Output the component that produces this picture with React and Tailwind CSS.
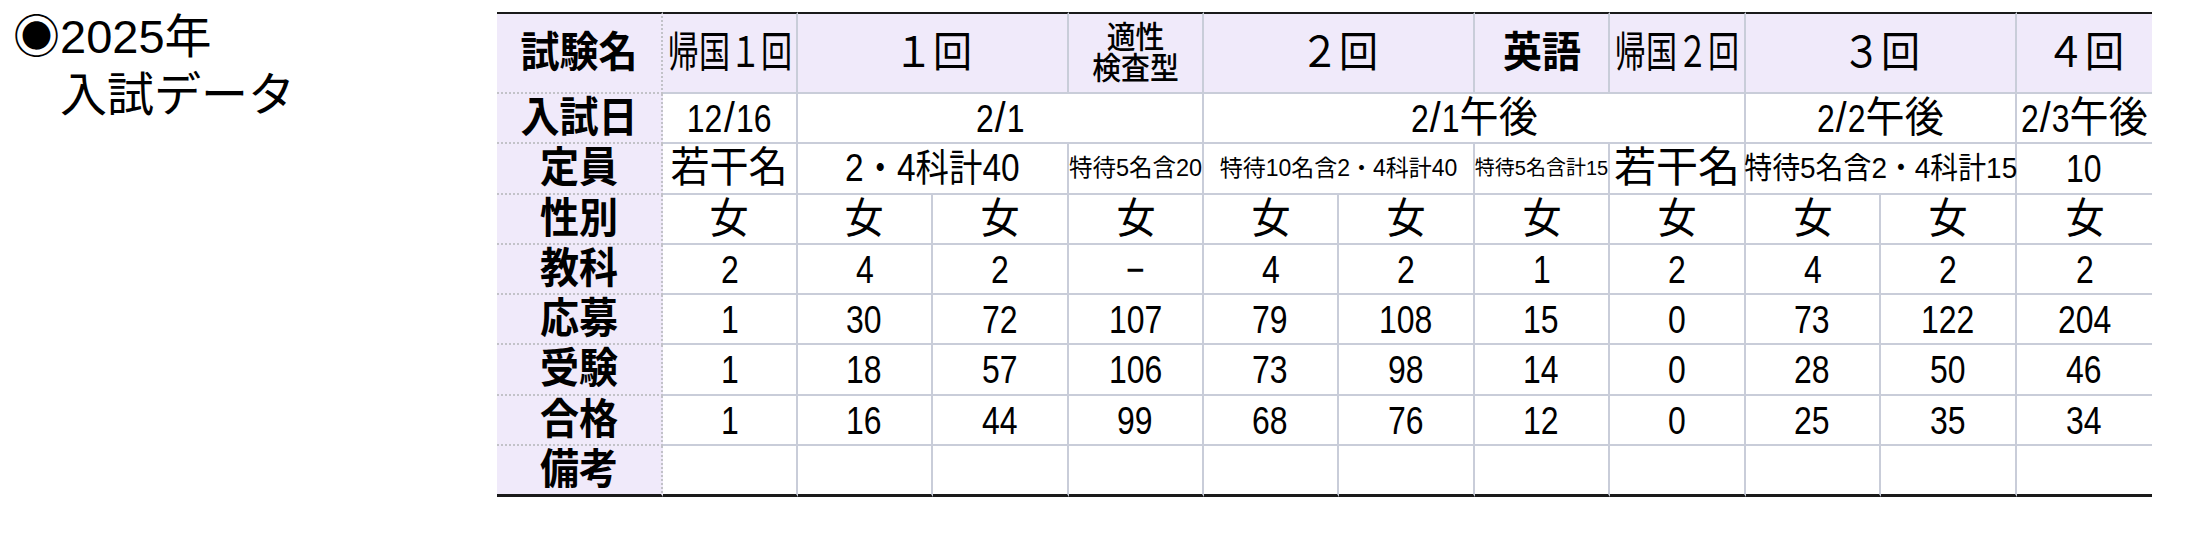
import React from "react";

const DMX = ["", "mx-[-0.033em]", "mx-[-0.067em]", "mx-[-0.1em]", "mx-[-0.134em]"];

function fmt(str) {
  const parts = str.match(/[0-9−]+|\/|[^0-9−/]+/g) || [];
  return parts.map((p, i) => {
    if (/^[0-9−]+$/.test(p))
      return (
        <span
          key={i}
          className={`inline-block text-[0.93em] scale-x-[0.88] font-['Liberation_Sans',sans-serif] ${DMX[p.length]}`}
        >
          {p}
        </span>
      );
    if (p === "/")
      return (
        <span key={i} className="mx-[0.03em]">
          /
        </span>
      );
    return <span key={i}>{p}</span>;
  });
}

function Td({ children, colSpan, last, extra = "", inner = "text-[42px] scale-x-[0.93]", raw = false }) {
  return (
    <td
      colSpan={colSpan}
      className={`p-0 text-center align-middle border-b-2 ${last ? "" : "border-r-2"} border-solid border-[#c9cdd9] ${extra}`}
    >
      <div className="flex items-center justify-center">
        <span className={`block whitespace-nowrap leading-[1.15] ${inner}`}>
          {raw || typeof children !== "string" ? children : fmt(children)}
        </span>
      </div>
    </td>
  );
}

function Lb({ children, extra = "" }) {
  return (
    <td
      className={`p-0 text-center align-middle bg-[#f0eafa] border-r-2 border-b-2 border-dotted border-[#c2c2c8] ${extra}`}
    >
      <div className="flex items-center justify-center">
        <span className="block whitespace-nowrap leading-[1.15] text-[42px] font-bold scale-x-[0.93]">{children}</span>
      </div>
    </td>
  );
}

const HEAD = "bg-[#f0eafa] border-t-2 border-t-[#1a1a1a]";
const BOT = "border-b-[3px] border-b-[#1a1a1a]";

export default function App() {
  const kyoka = ["2", "4", "2", "−", "4", "2", "1", "2", "4", "2", "2"];
  const oubo = ["1", "30", "72", "107", "79", "108", "15", "0", "73", "122", "204"];
  const juken = ["1", "18", "57", "106", "73", "98", "14", "0", "28", "50", "46"];
  const gokaku = ["1", "16", "44", "99", "68", "76", "12", "0", "25", "35", "34"];
  const widths = [135, 135, 136, 135, 135, 136, 135, 136, 135, 136, 135];

  const numRow = (label, arr) => (
    <tr className="h-[50px]">
      <Lb>{label}</Lb>
      {arr.map((v, i) => (
        <Td key={i} last={i === arr.length - 1}>
          {v}
        </Td>
      ))}
    </tr>
  );

  return (
    <div className="flex items-start bg-white text-black min-h-[560px] font-['Liberation_Sans','Noto_Sans_CJK_JP',sans-serif]">
      <div className="w-[497px] shrink-0 pl-[13px] pt-[8px] text-[47px] leading-[58px]">
        <div>◉2025年</div>
        <div>　入試データ</div>
      </div>
      <table className="mt-[12px] w-[1655px] table-fixed border-separate border-spacing-0">
        <colgroup>
          <col className="w-[166px]" />
          {widths.map((w, i) => (
            <col key={i} style={{ width: w }} />
          ))}
        </colgroup>
        <tbody>
          <tr className="h-[82px]">
            <Lb extra="border-t-2 border-t-[#1a1a1a] [border-top-style:solid]">試験名</Lb>
            <Td extra={HEAD} inner="text-[42px] scale-x-[0.74]" raw>帰国１回</Td>
            <Td extra={HEAD} colSpan={2} raw>１回</Td>
            <Td extra={HEAD} inner="text-[31px] leading-[31px] font-medium scale-x-[0.93]">
              適性
              <br />
              検査型
            </Td>
            <Td extra={HEAD} colSpan={2} raw>２回</Td>
            <Td extra={HEAD} inner="text-[42px] font-bold scale-x-[0.93]" raw>英語</Td>
            <Td extra={HEAD} inner="text-[42px] scale-x-[0.74]" raw>帰国２回</Td>
            <Td extra={HEAD} colSpan={2} raw>３回</Td>
            <Td extra={HEAD} last raw>４回</Td>
          </tr>
          <tr className="h-[50px]">
            <Lb>入試日</Lb>
            <Td>12/16</Td>
            <Td colSpan={3}>2/1</Td>
            <Td colSpan={4}>2/1午後</Td>
            <Td colSpan={2}>2/2午後</Td>
            <Td last>2/3午後</Td>
          </tr>
          <tr className="h-[50px]">
            <Lb>定員</Lb>
            <Td>若干名</Td>
            <Td colSpan={2} inner="text-[38px] scale-x-[0.88]" raw>2・4科計40</Td>
            <Td inner="text-[23.5px]" raw>特待5名含20</Td>
            <Td colSpan={2} inner="text-[23px]" raw>特待10名含2・4科計40</Td>
            <Td inner="text-[20px]" raw>特待5名含計15</Td>
            <Td inner="text-[42px]" raw>若干名</Td>
            <Td colSpan={2} inner="text-[30px] scale-x-[0.93]" raw>特待5名含2・4科計15</Td>
            <Td last>10</Td>
          </tr>
          {numRow("性別", Array(11).fill("女"))}
          {numRow("教科", kyoka)}
          {numRow("応募", oubo)}
          {numRow("受験", juken)}
          {numRow("合格", gokaku)}
          <tr className="h-[49px]">
            <Lb extra={`${BOT} [border-bottom-style:solid]`}>備考</Lb>
            {widths.map((w, i) => (
              <Td key={i} last={i === widths.length - 1} extra={BOT} raw>
                {""}
              </Td>
            ))}
          </tr>
        </tbody>
      </table>
    </div>
  );
}
